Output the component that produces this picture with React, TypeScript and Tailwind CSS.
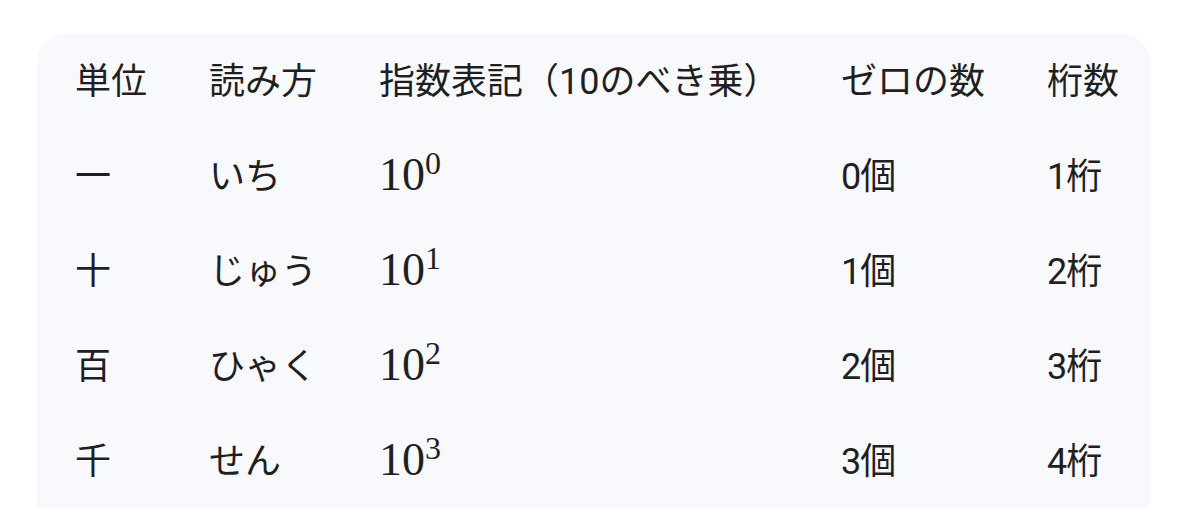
import React from 'react';

interface Row {
  unit: string;
  reading: string;
  exp: number;
  zeros: string;
  digits: string;
}

const rows: Row[] = [
  { unit: '一', reading: 'いち', exp: 0, zeros: '0個', digits: '1桁' },
  { unit: '十', reading: 'じゅう', exp: 1, zeros: '1個', digits: '2桁' },
  { unit: '百', reading: 'ひゃく', exp: 2, zeros: '2個', digits: '3桁' },
  { unit: '千', reading: 'せん', exp: 3, zeros: '3個', digits: '4桁' },
];

const headers = ['単位', '読み方', '指数表記（10のべき乗）', 'ゼロの数', '桁数'];

const gridCols = 'grid grid-cols-[134px_170px_462px_206px_1fr] h-[95px] items-center';

const Power: React.FC<{ exp: number }> = ({ exp }) => (
  <span className="font-['Liberation_Serif',serif] text-[46px] leading-none relative top-[-2px]">
    10<sup className="text-[32px] top-[-16px]">{exp}</sup>
  </span>
);

const App: React.FC = () => {
  return (
    <div className="w-[1200px] h-[518px] bg-white pt-[34px] pl-[37px] font-['Roboto','Noto_Sans_CJK_JP',sans-serif] text-[#1f1f1f]">
      <div className="w-[1113px] bg-[#f8f9fd] rounded-t-[28px] rounded-b-[6px] pl-[38px]">
        {/* header */}
        <div className={gridCols}>
          {headers.map(h => (
            <div key={h} className="text-[36px] whitespace-nowrap">{h}</div>
          ))}
        </div>
        {rows.map(r => (
          <div key={r.unit} className={gridCols}>
            <div className="text-[36px]">{r.unit}</div>
            <div className="text-[36px]">{r.reading}</div>
            <div><Power exp={r.exp} /></div>
            <div className="text-[36px] tracking-[-1px]">{r.zeros}</div>
            <div className="text-[36px] tracking-[-1px]">{r.digits}</div>
          </div>
        ))}
      </div>
    </div>
  );
};

export default App;
